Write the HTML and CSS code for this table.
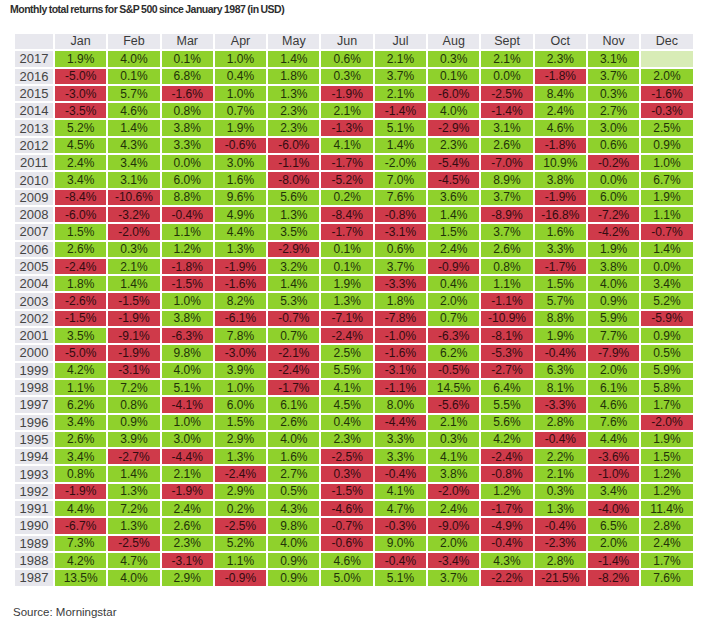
FILE: index.html
```html
<!DOCTYPE html>
<html>
<head>
<meta charset="utf-8">
<link rel="stylesheet" href="styles.css">
</head>
<body>
<div class="page">
<h1 class="title">Monthly total returns for S&amp;P 500 since January 1987 (in USD)</h1>
<div class="grid">
<div class="hd"></div><div class="hd">Jan</div><div class="hd">Feb</div><div class="hd">Mar</div><div class="hd">Apr</div><div class="hd">May</div><div class="hd">Jun</div><div class="hd">Jul</div><div class="hd">Aug</div><div class="hd">Sept</div><div class="hd">Oct</div><div class="hd">Nov</div><div class="hd">Dec</div>
<div class="yr">2017</div><div class="g">1.9%</div><div class="g">4.0%</div><div class="g">0.1%</div><div class="g">1.0%</div><div class="g">1.4%</div><div class="g">0.6%</div><div class="g">2.1%</div><div class="g">0.3%</div><div class="g">2.1%</div><div class="g">2.3%</div><div class="g">3.1%</div><div class="e"></div>
<div class="yr">2016</div><div class="r">-5.0%</div><div class="g">0.1%</div><div class="g">6.8%</div><div class="g">0.4%</div><div class="g">1.8%</div><div class="g">0.3%</div><div class="g">3.7%</div><div class="g">0.1%</div><div class="g">0.0%</div><div class="r">-1.8%</div><div class="g">3.7%</div><div class="g">2.0%</div>
<div class="yr">2015</div><div class="r">-3.0%</div><div class="g">5.7%</div><div class="r">-1.6%</div><div class="g">1.0%</div><div class="g">1.3%</div><div class="r">-1.9%</div><div class="g">2.1%</div><div class="r">-6.0%</div><div class="r">-2.5%</div><div class="g">8.4%</div><div class="g">0.3%</div><div class="r">-1.6%</div>
<div class="yr">2014</div><div class="r">-3.5%</div><div class="g">4.6%</div><div class="g">0.8%</div><div class="g">0.7%</div><div class="g">2.3%</div><div class="g">2.1%</div><div class="r">-1.4%</div><div class="g">4.0%</div><div class="r">-1.4%</div><div class="g">2.4%</div><div class="g">2.7%</div><div class="r">-0.3%</div>
<div class="yr">2013</div><div class="g">5.2%</div><div class="g">1.4%</div><div class="g">3.8%</div><div class="g">1.9%</div><div class="g">2.3%</div><div class="r">-1.3%</div><div class="g">5.1%</div><div class="r">-2.9%</div><div class="g">3.1%</div><div class="g">4.6%</div><div class="g">3.0%</div><div class="g">2.5%</div>
<div class="yr">2012</div><div class="g">4.5%</div><div class="g">4.3%</div><div class="g">3.3%</div><div class="r">-0.6%</div><div class="r">-6.0%</div><div class="g">4.1%</div><div class="g">1.4%</div><div class="g">2.3%</div><div class="g">2.6%</div><div class="r">-1.8%</div><div class="g">0.6%</div><div class="g">0.9%</div>
<div class="yr">2011</div><div class="g">2.4%</div><div class="g">3.4%</div><div class="g">0.0%</div><div class="g">3.0%</div><div class="r">-1.1%</div><div class="r">-1.7%</div><div class="g">-2.0%</div><div class="r">-5.4%</div><div class="r">-7.0%</div><div class="g">10.9%</div><div class="r">-0.2%</div><div class="g">1.0%</div>
<div class="yr">2010</div><div class="g">3.4%</div><div class="g">3.1%</div><div class="g">6.0%</div><div class="g">1.6%</div><div class="r">-8.0%</div><div class="r">-5.2%</div><div class="g">7.0%</div><div class="r">-4.5%</div><div class="g">8.9%</div><div class="g">3.8%</div><div class="g">0.0%</div><div class="g">6.7%</div>
<div class="yr">2009</div><div class="r">-8.4%</div><div class="r">-10.6%</div><div class="g">8.8%</div><div class="g">9.6%</div><div class="g">5.6%</div><div class="g">0.2%</div><div class="g">7.6%</div><div class="g">3.6%</div><div class="g">3.7%</div><div class="r">-1.9%</div><div class="g">6.0%</div><div class="g">1.9%</div>
<div class="yr">2008</div><div class="r">-6.0%</div><div class="r">-3.2%</div><div class="r">-0.4%</div><div class="g">4.9%</div><div class="g">1.3%</div><div class="r">-8.4%</div><div class="r">-0.8%</div><div class="g">1.4%</div><div class="r">-8.9%</div><div class="r">-16.8%</div><div class="r">-7.2%</div><div class="g">1.1%</div>
<div class="yr">2007</div><div class="g">1.5%</div><div class="r">-2.0%</div><div class="g">1.1%</div><div class="g">4.4%</div><div class="g">3.5%</div><div class="r">-1.7%</div><div class="r">-3.1%</div><div class="g">1.5%</div><div class="g">3.7%</div><div class="g">1.6%</div><div class="r">-4.2%</div><div class="r">-0.7%</div>
<div class="yr">2006</div><div class="g">2.6%</div><div class="g">0.3%</div><div class="g">1.2%</div><div class="g">1.3%</div><div class="r">-2.9%</div><div class="g">0.1%</div><div class="g">0.6%</div><div class="g">2.4%</div><div class="g">2.6%</div><div class="g">3.3%</div><div class="g">1.9%</div><div class="g">1.4%</div>
<div class="yr">2005</div><div class="r">-2.4%</div><div class="g">2.1%</div><div class="r">-1.8%</div><div class="r">-1.9%</div><div class="g">3.2%</div><div class="g">0.1%</div><div class="g">3.7%</div><div class="r">-0.9%</div><div class="g">0.8%</div><div class="r">-1.7%</div><div class="g">3.8%</div><div class="g">0.0%</div>
<div class="yr">2004</div><div class="g">1.8%</div><div class="g">1.4%</div><div class="r">-1.5%</div><div class="r">-1.6%</div><div class="g">1.4%</div><div class="g">1.9%</div><div class="r">-3.3%</div><div class="g">0.4%</div><div class="g">1.1%</div><div class="g">1.5%</div><div class="g">4.0%</div><div class="g">3.4%</div>
<div class="yr">2003</div><div class="r">-2.6%</div><div class="r">-1.5%</div><div class="g">1.0%</div><div class="g">8.2%</div><div class="g">5.3%</div><div class="g">1.3%</div><div class="g">1.8%</div><div class="g">2.0%</div><div class="r">-1.1%</div><div class="g">5.7%</div><div class="g">0.9%</div><div class="g">5.2%</div>
<div class="yr">2002</div><div class="r">-1.5%</div><div class="r">-1.9%</div><div class="g">3.8%</div><div class="r">-6.1%</div><div class="r">-0.7%</div><div class="r">-7.1%</div><div class="r">-7.8%</div><div class="g">0.7%</div><div class="r">-10.9%</div><div class="g">8.8%</div><div class="g">5.9%</div><div class="r">-5.9%</div>
<div class="yr">2001</div><div class="g">3.5%</div><div class="r">-9.1%</div><div class="r">-6.3%</div><div class="g">7.8%</div><div class="g">0.7%</div><div class="r">-2.4%</div><div class="r">-1.0%</div><div class="r">-6.3%</div><div class="r">-8.1%</div><div class="g">1.9%</div><div class="g">7.7%</div><div class="g">0.9%</div>
<div class="yr">2000</div><div class="r">-5.0%</div><div class="r">-1.9%</div><div class="g">9.8%</div><div class="r">-3.0%</div><div class="r">-2.1%</div><div class="g">2.5%</div><div class="r">-1.6%</div><div class="g">6.2%</div><div class="r">-5.3%</div><div class="r">-0.4%</div><div class="r">-7.9%</div><div class="g">0.5%</div>
<div class="yr">1999</div><div class="g">4.2%</div><div class="r">-3.1%</div><div class="g">4.0%</div><div class="g">3.9%</div><div class="r">-2.4%</div><div class="g">5.5%</div><div class="r">-3.1%</div><div class="r">-0.5%</div><div class="r">-2.7%</div><div class="g">6.3%</div><div class="g">2.0%</div><div class="g">5.9%</div>
<div class="yr">1998</div><div class="g">1.1%</div><div class="g">7.2%</div><div class="g">5.1%</div><div class="g">1.0%</div><div class="r">-1.7%</div><div class="g">4.1%</div><div class="r">-1.1%</div><div class="g">14.5%</div><div class="g">6.4%</div><div class="g">8.1%</div><div class="g">6.1%</div><div class="g">5.8%</div>
<div class="yr">1997</div><div class="g">6.2%</div><div class="g">0.8%</div><div class="r">-4.1%</div><div class="g">6.0%</div><div class="g">6.1%</div><div class="g">4.5%</div><div class="g">8.0%</div><div class="r">-5.6%</div><div class="g">5.5%</div><div class="r">-3.3%</div><div class="g">4.6%</div><div class="g">1.7%</div>
<div class="yr">1996</div><div class="g">3.4%</div><div class="g">0.9%</div><div class="g">1.0%</div><div class="g">1.5%</div><div class="g">2.6%</div><div class="g">0.4%</div><div class="r">-4.4%</div><div class="g">2.1%</div><div class="g">5.6%</div><div class="g">2.8%</div><div class="g">7.6%</div><div class="r">-2.0%</div>
<div class="yr">1995</div><div class="g">2.6%</div><div class="g">3.9%</div><div class="g">3.0%</div><div class="g">2.9%</div><div class="g">4.0%</div><div class="g">2.3%</div><div class="g">3.3%</div><div class="g">0.3%</div><div class="g">4.2%</div><div class="r">-0.4%</div><div class="g">4.4%</div><div class="g">1.9%</div>
<div class="yr">1994</div><div class="g">3.4%</div><div class="r">-2.7%</div><div class="r">-4.4%</div><div class="g">1.3%</div><div class="g">1.6%</div><div class="r">-2.5%</div><div class="g">3.3%</div><div class="g">4.1%</div><div class="r">-2.4%</div><div class="g">2.2%</div><div class="r">-3.6%</div><div class="g">1.5%</div>
<div class="yr">1993</div><div class="g">0.8%</div><div class="g">1.4%</div><div class="g">2.1%</div><div class="r">-2.4%</div><div class="g">2.7%</div><div class="r">0.3%</div><div class="r">-0.4%</div><div class="g">3.8%</div><div class="r">-0.8%</div><div class="g">2.1%</div><div class="r">-1.0%</div><div class="g">1.2%</div>
<div class="yr">1992</div><div class="r">-1.9%</div><div class="g">1.3%</div><div class="r">-1.9%</div><div class="g">2.9%</div><div class="g">0.5%</div><div class="r">-1.5%</div><div class="g">4.1%</div><div class="r">-2.0%</div><div class="g">1.2%</div><div class="g">0.3%</div><div class="g">3.4%</div><div class="g">1.2%</div>
<div class="yr">1991</div><div class="g">4.4%</div><div class="g">7.2%</div><div class="g">2.4%</div><div class="g">0.2%</div><div class="g">4.3%</div><div class="r">-4.6%</div><div class="g">4.7%</div><div class="g">2.4%</div><div class="r">-1.7%</div><div class="g">1.3%</div><div class="r">-4.0%</div><div class="g">11.4%</div>
<div class="yr">1990</div><div class="r">-6.7%</div><div class="g">1.3%</div><div class="g">2.6%</div><div class="r">-2.5%</div><div class="g">9.8%</div><div class="r">-0.7%</div><div class="r">-0.3%</div><div class="r">-9.0%</div><div class="r">-4.9%</div><div class="r">-0.4%</div><div class="g">6.5%</div><div class="g">2.8%</div>
<div class="yr">1989</div><div class="g">7.3%</div><div class="r">-2.5%</div><div class="g">2.3%</div><div class="g">5.2%</div><div class="g">4.0%</div><div class="r">-0.6%</div><div class="g">9.0%</div><div class="g">2.0%</div><div class="r">-0.4%</div><div class="r">-2.3%</div><div class="g">2.0%</div><div class="g">2.4%</div>
<div class="yr">1988</div><div class="g">4.2%</div><div class="g">4.7%</div><div class="r">-3.1%</div><div class="g">1.1%</div><div class="g">0.9%</div><div class="g">4.6%</div><div class="r">-0.4%</div><div class="r">-3.4%</div><div class="g">4.3%</div><div class="g">2.8%</div><div class="r">-1.4%</div><div class="g">1.7%</div>
<div class="yr">1987</div><div class="g">13.5%</div><div class="g">4.0%</div><div class="g">2.9%</div><div class="r">-0.9%</div><div class="g">0.9%</div><div class="g">5.0%</div><div class="g">5.1%</div><div class="g">3.7%</div><div class="r">-2.2%</div><div class="r">-21.5%</div><div class="r">-8.2%</div><div class="g">7.6%</div>
</div>
<p class="source">Source: Morningstar</p>
</div>
</body>
</html>
```

FILE: styles.css
```css
html, body {
  margin: 0;
  padding: 0;
  background: #ffffff;
}

.page {
  padding: 3px 0 0 10px;
  font-family: "Liberation Sans", Arial, sans-serif;
  color: #2b2b2b;
}

.title {
  margin: 0;
  font-size: 10.5px;
  font-weight: bold;
  line-height: 12px;
  letter-spacing: -0.5px;
  word-spacing: -0.5px;
  color: #2e2e2e;
}

.grid {
  display: grid;
  grid-template-columns: 38px repeat(12, 51.3px);
  grid-auto-rows: 15.3px;
  gap: 2px;
  margin: 19px 0 0 5px;
  font-size: 12px;
}

.grid > div {
  display: flex;
  align-items: center;
  justify-content: center;
  line-height: 1;
}

.hd {
  background: #e8e8ee;
  color: #3a3a3a;
  font-size: 12.5px;
}

.yr {
  background: #e6e6ec;
  color: #444444;
  font-size: 13px;
}

.g {
  background: #8fd12c;
  color: #223308;
}

.r {
  background: #cf3a4a;
  color: #330c10;
}

.e {
  background: #d8ecb6;
}

.source {
  margin: 19px 0 0 3px;
  font-size: 11.5px;
  line-height: 14px;
  color: #3a3a3a;
}
```
